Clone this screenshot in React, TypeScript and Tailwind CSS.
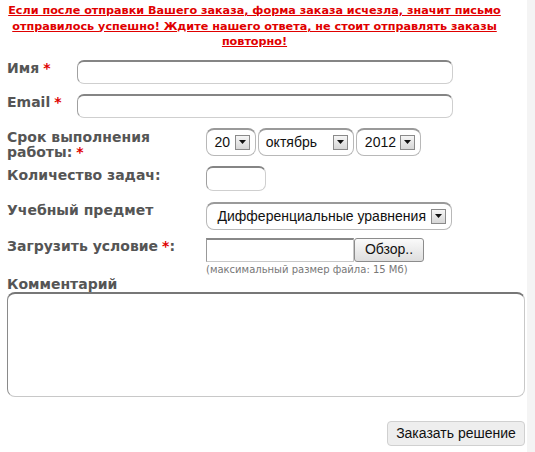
import React from 'react';

const label = "text-[14px] font-bold text-[#555] leading-[15px] [font-family:'DejaVu_Sans',Verdana,sans-serif]";
const field =
  "bg-white border border-[#cfcfcf] border-t-2 border-t-[#858585] border-l-[#a0a0a0] rounded-[7px]";

function Star() {
  return <span className="text-[#e00000] ml-[4px]">*</span>;
}

function Arrow() {
  return (
    <span className="inline-flex items-center justify-center w-[15px] h-[15px] border border-[#8a8a8a] bg-gradient-to-b from-[#f6f6f6] to-[#d6d6d6]">
      <svg width="7" height="4" viewBox="0 0 7 4">
        <path d="M0 0h7L3.5 4z" fill="#111" />
      </svg>
    </span>
  );
}

function Select({ value, w, gap }: { value: string; w: string; gap: string }) {
  return (
    <div
      className={`${w} h-[28px] flex items-center justify-end pr-[5px] bg-white border border-[#b8b8b8] border-t-2 border-t-[#9a9a9a] rounded-[8px] text-[14px] text-[#111] [font-family:'Liberation_Sans',Arial,sans-serif]`}
    >
      <span className={gap}>{value}</span>
      <Arrow />
    </div>
  );
}

export default function App() {
  return (
    <div className="w-[535px] h-[452px] bg-white relative overflow-hidden">
      <div className="absolute right-0 top-0 w-[8px] h-full bg-[#f4f4f4]" />

      <p className="w-[509px] pt-[3px] text-center text-[11.2px] leading-[15.5px] font-bold text-[#e00000] underline [font-family:'DejaVu_Sans',Verdana,sans-serif]">
        Если после отправки Вашего заказа, форма заказа исчезла, значит письмо отправилось успешно! Ждите нашего ответа, не стоит отправлять заказы повторно!
      </p>

      <div className="pl-[7px] pt-[10px] flex flex-col">
        <div className="flex items-start h-[24px]">
          <span className={`${label} w-[70px] pt-[1px]`}>
            Имя<Star />
          </span>
          <div className={`${field} w-[376px] h-[24px]`} />
        </div>

        <div className="flex items-start h-[24px] mt-[10px]">
          <span className={`${label} w-[70px] pt-[1px]`}>
            Email<Star />
          </span>
          <div className={`${field} w-[376px] h-[24px]`} />
        </div>

        <div className="flex items-start mt-[10px]">
          <span className={`${label} w-[199px] pt-[2px]`}>
            Срок выполнения
            <br />
            работы:<Star />
          </span>
          <div className="flex gap-[2px]">
            <Select value="20" w="w-[50px]" gap="mr-[5px]" />
            <Select value="октябрь" w="w-[96px]" gap="mr-[16px]" />
            <Select value="2012" w="w-[65px]" gap="mr-[4px]" />
          </div>
        </div>

        <div className="flex items-start mt-[6px]">
          <span className={`${label} w-[199px] pt-[2px]`}>Количество задач:</span>
          <div className={`${field} w-[60px] h-[25px]`} />
        </div>

        <div className="flex items-start mt-[11px]">
          <span className={`${label} w-[199px] pt-[1px]`}>Учебный предмет</span>
          <Select value="Дифференциальные уравнения" w="w-[246px]" gap="mr-[5px]" />
        </div>

        <div className="flex items-start mt-[8px]">
          <span className={`${label} w-[199px] pt-[1px]`}>
            Загрузить условие<Star />:
          </span>
          <div className="flex flex-col">
            <div className="flex items-center">
              <div className="w-[148px] h-[24px] bg-white border border-[#c8c8c8] border-t-2 border-t-[#888] border-l-[#999]" />
              <button className="w-[70px] h-[24px] border border-[#8c8c8c] rounded-[3px] bg-gradient-to-b from-[#fafafa] to-[#dedede] text-[14px] text-[#111] [font-family:'Liberation_Sans',Arial,sans-serif]">
                Обзор..
              </button>
            </div>
            <span className="text-[10px] text-[#777] mt-[1px] leading-[13px] [font-family:'DejaVu_Sans',Verdana,sans-serif]">
              (максимальный размер файла: 15 Мб)
            </span>
          </div>
        </div>

        <span className={`${label} mt-[1px]`}>Комментарий</span>
        <div className="w-[518px] h-[105px] bg-white border border-[#c8c8c8] border-t-2 border-t-[#777] border-l-[#8a8a8a] rounded-[8px]" />

        <div className="flex justify-end w-[518px] mt-[24px]">
          <button className="w-[138px] h-[25px] border border-[#d0d0d0] rounded-[4px] bg-[#eeeeee] text-[14px] text-[#111] [font-family:'Liberation_Sans',Arial,sans-serif]">
            Заказать решение
          </button>
        </div>
      </div>
    </div>
  );
}
